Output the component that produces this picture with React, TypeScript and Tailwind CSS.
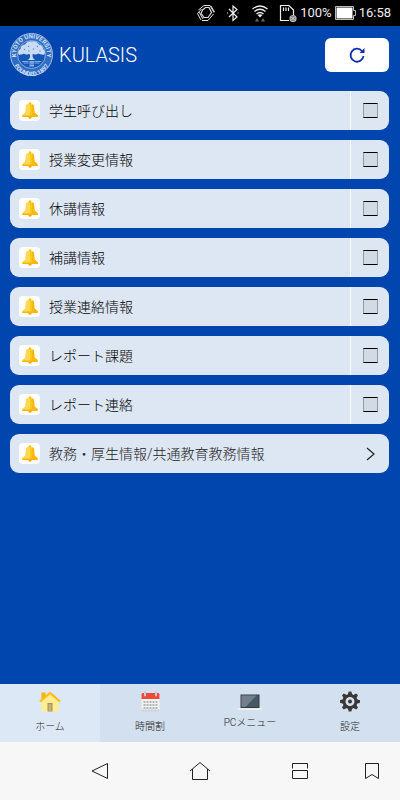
import React from "react";

const notices = [
  "学生呼び出し",
  "授業変更情報",
  "休講情報",
  "補講情報",
  "授業連絡情報",
  "レポート課題",
  "レポート連絡",
];

function Seal() {
  return (
    <svg viewBox="0 0 86 86" className="size-[43px] shrink-0" role="img" aria-label="Kyoto University">
      <defs>
        <path id="seal-top" d="M14 53A31 31 0 1 1 72 53" />
        <path id="seal-bottom" d="M4 47A39 39 0 0 0 82 47" />
      </defs>
      <circle cx="43" cy="43" r="42" fill="#2f6cc4" stroke="#a9c4ea" strokeWidth="2" />
      <circle cx="43" cy="43" r="28" fill="#1457b8" stroke="#a9c4ea" strokeWidth="1.500" />
      <g fill="#d5e3f6" fontFamily="Roboto, sans-serif" fontSize="12" fontWeight="700">
        <text textAnchor="middle">
          <textPath href="#seal-top" startOffset="50%">KYOTO UNIVERSITY</textPath>
        </text>
        <text textAnchor="middle">
          <textPath href="#seal-bottom" startOffset="50%">FOUNDED 1897</textPath>
        </text>
      </g>
      <path
        d="M17 43c-2-6 1-10 4-11 0-6 5-9 9-9 3-6 10-7 14-6 6-2 12 2 14 6 5 1 8 4 8 9 4 2 5 7 3 11-4 1-9 0-12-2-3 2-7 3-10 1l-2 1c0 6 1 9 6 11H35c4-2 6-5 5-11l-3-1c-3 2-7 1-9-1-3 2-7 3-11 2Z"
        fill="#c9dbf3"
      />
      <g fill="#5f91d4">
        <circle cx="29" cy="33" r="1.500" />
        <circle cx="37" cy="27" r="1.500" />
        <circle cx="47" cy="32" r="1.500" />
        <circle cx="55" cy="27" r="1.500" />
        <circle cx="60" cy="36" r="1.500" />
        <circle cx="38" cy="36" r="1.500" />
      </g>
      <path d="M24 57h13M49 57h13M27 60h10M49 60h10" stroke="#a9c4ea" strokeWidth="1.500" />
      <path d="M39 56h9v11h-9z" fill="#8fb3e4" />
      <path d="M39 60h9M39 63h9" stroke="#1457b8" />
    </svg>
  );
}

function Bell() {
  return (
    <span className="flex size-[21px] shrink-0 items-center justify-center rounded-[4px] bg-white">
      <svg viewBox="0 0 32 34" className="h-[17px] w-4" aria-hidden="true">
        <circle cx="16" cy="3.500" r="3" fill="#ffc107" />
        <circle cx="16" cy="30" r="3.500" fill="#f0a400" />
        <path d="M8 8q0-3 3-3h10q3 0 3 3l1 13 6 5v4H1v-4l6-5Z" fill="#ffc91a" />
        <path d="M8 8q0-3 3-3h5v25H1v-4l6-5Z" fill="#ffd951" />
        <path d="M20 5h1q3 0 3 3l1 13 6 5v4H20Z" fill="#fdb80f" />
        <path d="M1 27h30v3H1z" fill="#f9b50b" />
      </svg>
    </span>
  );
}

function StatusBar() {
  return (
    <div className="flex h-[26px] items-center justify-end bg-black pr-[9px] text-[13px] text-[#eeeeee]">
      <svg viewBox="0 0 20 18" className="mr-[9px] h-[18px] w-5" fill="none" stroke="#e2e2e2" aria-hidden="true">
        <path d="m6.500 6 3-2.500h3.500l2.500 5-3.500 5H8L5 9.500Z" strokeWidth="1.200" />
        <path d="M8 1.500h6l4 7M8 1.500 2.500 6M5.500 5 1.500 9.500 5 16M3 8l4 7M17.500 10 12 16.500H6M15 2l3.500 6" strokeWidth="1" />
      </svg>
      <svg viewBox="0 0 16 18" className="h-[18px] w-4" fill="none" stroke="#eeeeee" strokeWidth="1.200" aria-hidden="true">
        <path d="m4 5 8 8-4 3.500V2l4 3.500L4 13M2 9h1M12.500 9h1" />
      </svg>
      <svg viewBox="0 0 18 18" className="mr-[10px] ml-2.5 h-[18px] w-[18px]" fill="none" stroke="#eeeeee" strokeWidth="1.300" aria-hidden="true">
        <path d="M1.500 5q7.500-6 15 0M3.500 7.500q5.500-4.500 11 0M5.500 10q3.500-3 7 0" />
        <path d="m6.500 11 2.500 2.500 2.500-2.500q-2.500-1.500-5 0Z" fill="#eeeeee" stroke="none" />
        <path d="M4 17.500h4L6 14ZM10 17.500h4L12 14Z" fill="#666" stroke="none" />
      </svg>
      <svg viewBox="0 0 18 18" className="mr-[3px] h-[18px] w-[18px]" fill="none" stroke="#eeeeee" strokeWidth="1.200" aria-hidden="true">
        <path d="M10 16.500H1.500v-15H10L14.500 6v5" />
        <path d="M4.500 3.500V7M7 3.500V7M9.500 3.500V7" />
        <circle cx="14" cy="14.500" r="3" fill="#777" stroke="#bbb" />
        <path d="m12.500 13 3 3m0-3-3 3" strokeWidth=".8" />
      </svg>
      <span>100%</span>
      <svg viewBox="0 0 21 14" className="mr-[3px] ml-[3px] h-[14px] w-[21px]" aria-hidden="true">
        <path d="M.5.5h18v4h2v5h-2v4H.5Z" fill="none" stroke="#bbb" />
        <path d="M1.500 1.500h16v11h-16z" fill="#fff" />
      </svg>
      <span>16:58</span>
    </div>
  );
}

function HouseIcon() {
  return (
    <svg viewBox="0 0 44 42" className="h-[21px] w-[22px]" aria-hidden="true">
      <path d="M5 3h8v14H5z" fill="#ffb300" />
      <path d="M22 6 5 21v20h34V21Z" fill="#ffed91" />
      <path d="M17 24h10v17H17z" fill="#a3935b" />
      <path d="M19 26h6v14h-6z" fill="#c1b278" />
      <path d="M2 21 22 4l20 17" fill="none" stroke="#ffbd16" strokeWidth="4.500" />
    </svg>
  );
}

function CalendarIcon() {
  return (
    <svg viewBox="0 0 38 42" className="h-[21px] w-[19px]" aria-hidden="true">
      <rect x="1" y="6" width="36" height="34" rx="3" fill="#f2f2f2" />
      <path d="M1 37h36v1q0 3-3 3H4q-3 0-3-3Z" fill="#cfd4da" />
      <path d="M1 16V7q0-3 3-3h30q3 0 3 3v9Z" fill="#ef4937" />
      <path d="M8 2v7M30 2v7" stroke="#c9cdd2" strokeWidth="4" strokeLinecap="round" />
      <path d="M5 22h28M5 28h28M5 34h28" stroke="#b1b6bc" strokeWidth="4" strokeDasharray="4 2" />
    </svg>
  );
}

function LaptopIcon() {
  return (
    <svg viewBox="0 0 48 42" className="h-[21px] w-6" aria-hidden="true">
      <path d="M5 7h38v27H5z" fill="#303c45" />
      <path d="M7 9h34v23H7z" fill="#465967" />
      <path d="M7 9h30L15 32H7Z" fill="#73808a" />
      <path d="M0 34h48v2q0 2-3 2H3q-3 0-3-2Z" fill="#eeeeec" />
    </svg>
  );
}

function GearIcon() {
  return (
    <svg viewBox="0 0 40 42" className="h-[21px] w-5" aria-hidden="true">
      <g fill="#3a3735" transform="translate(20 21)">
        {[0, 45, 90, 135, 180, 225, 270, 315].map((angle) => (
          <path key={angle} d="M-5-12-2.500-20h5l2.500 8Z" transform={`rotate(${angle})`} />
        ))}
        <circle r="12" fill="none" stroke="#3a3735" strokeWidth="6" />
        <circle r="4" />
      </g>
    </svg>
  );
}

const tabs = [
  { label: "ホーム", icon: <HouseIcon />, tone: "bg-[#dce8f5]", gap: "gap-[9px]" },
  { label: "時間割", icon: <CalendarIcon />, tone: "bg-[#d3e0f0]", gap: "gap-[9px]" },
  { label: "PCメニュー", icon: <LaptopIcon />, tone: "bg-[#d3e0f0]", gap: "gap-[5px]" },
  { label: "設定", icon: <GearIcon />, tone: "bg-[#d3e0f0]", gap: "gap-[9px]" },
];

export default function App() {
  return (
    <div className="flex min-h-screen flex-col bg-[#0046ae] font-[Roboto,'Noto_Sans_CJK_JP',sans-serif]">
      <StatusBar />
      <header className="flex items-center pt-[7px] pr-[11px] pl-2.5">
        <Seal />
        <h1 className="ml-1.5 flex-1 text-xl leading-6 font-light text-white">KULASIS</h1>
        <button
          type="button"
          aria-label="更新"
          className="flex h-[34px] w-16 items-center justify-center rounded-[6px] bg-white"
        >
          <svg viewBox="0 0 18 18" className="size-[18px]" fill="none" aria-hidden="true">
            <path d="M14 5A6.500 6.500 0 1 0 15.500 10" stroke="#0b2eaa" strokeWidth="1.800" />
            <path d="M16.500 2v5H11.500Z" fill="#0b2eaa" />
          </svg>
        </button>
      </header>

      <main className="flex-1 pt-[15px] pr-[11px] pb-4 pl-2.5">
        <ul className="flex flex-col gap-2.5 font-light">
          {notices.map((label, i) => (
            <li key={label} className="flex h-[39px] overflow-hidden rounded-[9px] bg-[#dde7f4] text-sm text-black">
              <label htmlFor={`notice-${i}`} className="flex flex-1 items-center gap-[9px] pl-[9px]">
                <Bell />
                {label}
              </label>
              <div className="flex w-[39px] items-center justify-center border-l border-white">
                <input
                  id={`notice-${i}`}
                  type="checkbox"
                  className="size-[15px] appearance-none border border-x-[#999999] border-y-black bg-[#d0dbe6] checked:bg-[#0046ae]"
                />
              </div>
            </li>
          ))}
          <li>
            <a
              href="#information"
              className="flex h-[39px] items-center gap-[9px] rounded-[9px] bg-[#dde7f4] pr-3.5 pl-[9px] text-sm text-[#222222]"
            >
              <Bell />
              <span className="flex-1">教務・厚生情報/共通教育教務情報</span>
              <svg viewBox="0 0 9 14" className="h-3.5 w-[9px]" fill="none" stroke="#222" strokeWidth="1.200" aria-hidden="true">
                <path d="m1 1 7 6-7 6" />
              </svg>
            </a>
          </li>
        </ul>
      </main>

      <nav className="grid h-[58px] grid-cols-4 font-light" aria-label="メインメニュー">
        {tabs.map((tab) => (
          <button
            key={tab.label}
            type="button"
            className={`flex flex-col items-center justify-start pt-[7px] text-[10px] leading-3 text-[#222222] ${tab.tone} ${tab.gap}`}
          >
            {tab.icon}
            <span>{tab.label}</span>
          </button>
        ))}
      </nav>

      <div className="flex h-[58px] items-center bg-[#f7f7f7] pl-[50px] text-[#222222]">
        <button type="button" aria-label="戻る" className="flex flex-1 justify-center">
          <svg viewBox="0 0 18 18" className="size-[18px]" fill="none" stroke="currentColor" aria-hidden="true">
            <path d="M16.500 1.500v15L1 9Z" />
          </svg>
        </button>
        <button type="button" aria-label="ホーム画面" className="flex flex-1 justify-center">
          <svg viewBox="0 0 22 20" className="h-5 w-[22px]" fill="none" stroke="currentColor" aria-hidden="true">
            <path d="M1 10 11 1.500 21 10M3.500 8v10.500h15V8" />
          </svg>
        </button>
        <button type="button" aria-label="分割画面" className="flex flex-1 justify-center">
          <svg viewBox="0 0 18 18" className="size-[18px]" fill="none" stroke="currentColor" aria-hidden="true">
            <path d="M1.500 6.500v-5h15v5M1.500 8.500h15v8h-15Z" />
          </svg>
        </button>
        <button type="button" aria-label="ブックマーク" className="flex w-[50px] justify-center pr-1.5">
          <svg viewBox="0 0 16 18" className="h-[18px] w-4" fill="none" stroke="currentColor" aria-hidden="true">
            <path d="M1.500 1.500h13v15L8 12.500l-6.500 4Z" />
          </svg>
        </button>
      </div>
    </div>
  );
}
